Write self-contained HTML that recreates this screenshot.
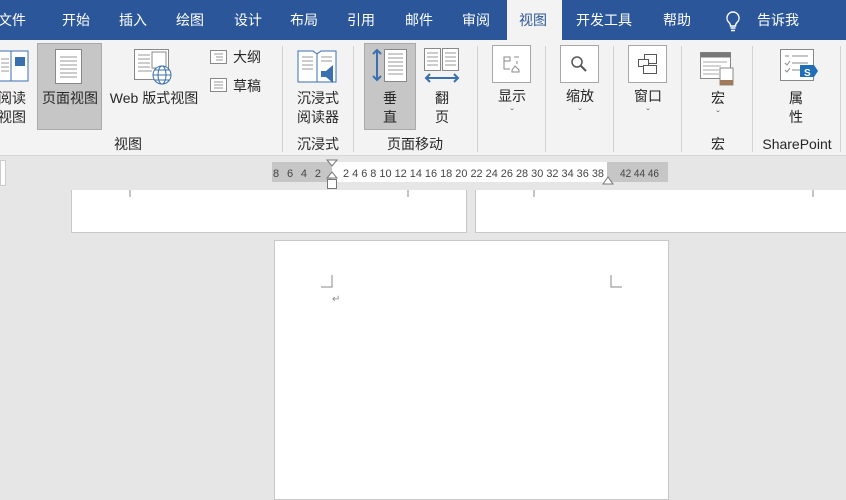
<!DOCTYPE html>
<html><head><meta charset="utf-8"><style>
*{margin:0;padding:0;box-sizing:border-box}
body{width:846px;height:495px;overflow:hidden;background:#e6e6e6;font-family:"Liberation Sans","Noto Sans CJK SC",sans-serif;position:relative;color:#262626}
.a{position:absolute}
.tabs{left:0;top:0;width:846px;height:40px;background:#2b579a}
.tab{position:absolute;top:11px;color:#fff;font-size:14px;line-height:18px}
.rib{left:0;top:40px;width:846px;height:116px;background:#f3f3f3;border-bottom:1px solid #d6d6d6}
.t{position:absolute;font-size:14px;line-height:19px;text-align:center;color:#262626;white-space:nowrap}
.sep{position:absolute;top:46px;width:1px;height:106px;background:#d2d2d2}
.box{position:absolute;background:#fff;border:1px solid #a8a8a8}
.pg{position:absolute;background:#fff;border:1px solid #c8c8c8}
.ln{stroke:#8a8a8a;stroke-width:1;fill:none}
</style></head><body>
<div class="a tabs"></div>
<div class="a" style="left:507px;top:0;width:55px;height:40px;background:#f3f3f3"></div>
<div class="tab" style="left:-2px">文件</div>
<div class="tab" style="left:62px">开始</div>
<div class="tab" style="left:119px">插入</div>
<div class="tab" style="left:176px">绘图</div>
<div class="tab" style="left:234px">设计</div>
<div class="tab" style="left:290px">布局</div>
<div class="tab" style="left:347px">引用</div>
<div class="tab" style="left:405px">邮件</div>
<div class="tab" style="left:462px">审阅</div>
<div class="tab" style="left:519px;color:#2b579a">视图</div>
<div class="tab" style="left:576px">开发工具</div>
<div class="tab" style="left:663px">帮助</div>
<svg class="a" style="left:724px;top:10px" width="18" height="22"><path d="M9 2a6 6 0 0 0-4 10.5c1 1 1.5 2 1.5 3.5h5c0-1.5.5-2.5 1.5-3.5A6 6 0 0 0 9 2zM6.5 18h5M7 20.5h4" stroke="#fff" stroke-width="1.4" fill="none"/></svg>
<div class="tab" style="left:757px">告诉我</div>

<div class="a rib"></div>
<svg class="a" style="left:0;top:49px" width="30" height="36"><rect x="-6" y="2" width="34" height="30" fill="#fff" stroke="#3a6fb0"/><line x1="11" y1="2" x2="11" y2="32" stroke="#3a6fb0"/><rect x="15" y="8" width="10" height="9" fill="#3a6fb0"/><path d="M1 10h8M1 14h8M1 18h8M1 22h8" stroke="#999"/></svg>
<div class="t" style="left:-4px;top:89px;width:32px">阅读<br>视图</div>
<div class="a" style="left:37px;top:43px;width:65px;height:87px;background:#c6c6c6;border:1px solid #aaa"></div>
<svg class="a" style="left:55px;top:49px" width="28" height="36"><rect x="0.5" y="0.5" width="26" height="34" fill="#fff" stroke="#888"/><path d="M5 8h17M5 12h17M5 16h17M5 20h17M5 24h17M5 28h17" stroke="#999"/></svg>
<div class="t" style="left:38px;top:89px;width:64px">页面视图</div>
<svg class="a" style="left:134px;top:49px" width="42" height="38"><rect x="0.5" y="0.5" width="34" height="30" fill="#fff" stroke="#888"/><rect x="18" y="3" width="14" height="16" fill="#fff" stroke="#888"/><path d="M4 6h12M4 10h12M4 14h12M4 18h12M4 22h14" stroke="#999"/><circle cx="28" cy="26" r="9" fill="#fff" stroke="#3a6fb0"/><ellipse cx="28" cy="26" rx="4" ry="9" fill="none" stroke="#3a6fb0"/><path d="M19 26h18M21 21h14M21 31h14" stroke="#3a6fb0"/></svg>
<div class="t" style="left:104px;top:89px;width:100px">Web 版式视图</div>
<svg class="a" style="left:210px;top:50px" width="18" height="15"><rect x="0.5" y="0.5" width="16" height="13" fill="#fff" stroke="#888"/><path d="M4 4h9M6 7h7M6 10h7" stroke="#999"/></svg>
<div class="t" style="left:233px;top:48px">大纲</div>
<svg class="a" style="left:210px;top:78px" width="18" height="15"><rect x="0.5" y="0.5" width="16" height="13" fill="#fff" stroke="#888"/><path d="M4 4h9M4 7h9M4 10h9" stroke="#999"/></svg>
<div class="t" style="left:233px;top:77px">草稿</div>
<div class="t" style="left:110px;top:135px;width:36px">视图</div>
<div class="sep" style="left:282px"></div>
<svg class="a" style="left:297px;top:47px" width="42" height="40"><path d="M1 4h15l4 3 4-3h15v31H1z" fill="#fff" stroke="#3a6fb0"/><line x1="20" y1="7" x2="20" y2="35" stroke="#3a6fb0"/><path d="M5 10h11M5 14h11M5 18h11M5 22h11M24 10h11M24 14h11" stroke="#999"/><path d="M24 24h5l7-6v18l-7-6h-5z" fill="#3a6fb0"/></svg>
<div class="t" style="left:288px;top:89px;width:60px">沉浸式<br>阅读器</div>
<div class="t" style="left:288px;top:135px;width:60px">沉浸式</div>
<div class="sep" style="left:353px"></div>
<div class="a" style="left:364px;top:43px;width:52px;height:87px;background:#c6c6c6;border:1px solid #aaa"></div>
<svg class="a" style="left:370px;top:48px" width="40" height="36"><path d="M7 2v30M3 6l4-4 4 4M3 28l4 4 4-4" stroke="#3a6fb0" stroke-width="2" fill="none"/><rect x="14.5" y="1.5" width="22" height="32" fill="#fff" stroke="#888"/><path d="M18 6h15M18 10h15M18 14h15M18 18h15M18 22h15M18 26h15" stroke="#999"/></svg>
<div class="t" style="left:364px;top:89px;width:52px">垂<br>直</div>
<svg class="a" style="left:424px;top:48px" width="36" height="38"><rect x="0.5" y="0.5" width="16" height="22" fill="#fff" stroke="#888"/><rect x="18.5" y="0.5" width="16" height="22" fill="#fff" stroke="#888"/><path d="M3 5h11M3 9h11M3 13h11M3 17h11M21 5h11M21 9h11M21 13h11M21 17h11" stroke="#999"/><path d="M2 30h32M6 26l-4 4 4 4M30 26l4 4-4 4" stroke="#3a6fb0" stroke-width="2" fill="none"/></svg>
<div class="t" style="left:424px;top:89px;width:36px">翻<br>页</div>
<div class="t" style="left:380px;top:135px;width:70px">页面移动</div>
<div class="sep" style="left:477px"></div>
<div class="box" style="left:492px;top:45px;width:39px;height:38px"></div>
<svg class="a" style="left:502px;top:54px" width="20" height="20"><path d="M2 3h6v4H2zM2 7v8h6M12 3h5M15 7v3M10 16l3-4 4 4v2h-7z" stroke="#888" fill="none"/></svg>
<div class="t" style="left:492px;top:87px;width:40px">显示</div>
<div class="t" style="left:492px;top:104px;width:40px;font-size:10px;color:#666">ˇ</div>
<div class="sep" style="left:545px"></div>
<div class="box" style="left:560px;top:45px;width:39px;height:38px"></div>
<svg class="a" style="left:570px;top:55px" width="18" height="18"><circle cx="7" cy="7" r="5" stroke="#555" stroke-width="1.5" fill="none"/><path d="M11 11l5 5" stroke="#555" stroke-width="2"/></svg>
<div class="t" style="left:560px;top:87px;width:40px">缩放</div>
<div class="t" style="left:560px;top:104px;width:40px;font-size:10px;color:#666">ˇ</div>
<div class="sep" style="left:613px"></div>
<div class="box" style="left:628px;top:45px;width:39px;height:38px"></div>
<svg class="a" style="left:637px;top:53px" width="22" height="22"><rect x="7.5" y="1.5" width="12" height="9" fill="#fff" stroke="#555"/><rect x="1.5" y="6.5" width="10" height="7" fill="#fff" stroke="#555"/><rect x="6.5" y="12.5" width="13" height="8" fill="#fff" stroke="#555"/></svg>
<div class="t" style="left:628px;top:87px;width:40px">窗口</div>
<div class="t" style="left:628px;top:104px;width:40px;font-size:10px;color:#666">ˇ</div>
<div class="sep" style="left:681px"></div>
<svg class="a" style="left:700px;top:52px" width="36" height="34"><rect x="0.5" y="0.5" width="30" height="26" fill="#fff" stroke="#888"/><rect x="0.5" y="0.5" width="30" height="5" fill="#777"/><path d="M3 10h24M3 14h18M3 18h16M3 22h16" stroke="#aaa"/><rect x="20" y="16" width="13" height="17" fill="#fff" stroke="#888"/><rect x="20" y="28" width="13" height="5" fill="#a07a5a"/></svg>
<div class="t" style="left:698px;top:89px;width:40px">宏</div>
<div class="t" style="left:698px;top:106px;width:40px;font-size:10px;color:#666">ˇ</div>
<div class="t" style="left:698px;top:135px;width:40px">宏</div>
<div class="sep" style="left:752px"></div>
<svg class="a" style="left:780px;top:49px" width="40" height="36"><rect x="0.5" y="0.5" width="33" height="31" fill="#fff" stroke="#888"/><path d="M5 7h4M12 7h16M5 14l2 2 3-4M12 14h16M5 21l2 2 3-4M12 21h8" stroke="#888" fill="none"/><path d="M20 16h14l4 6-4 6H20z" fill="#1e6fb8"/><text x="24" y="27" font-size="10" fill="#fff" font-weight="bold" font-family="Liberation Sans">S</text></svg>
<div class="t" style="left:776px;top:89px;width:40px">属<br>性</div>
<div class="t" style="left:755px;top:135px;width:84px">SharePoint</div>
<div class="sep" style="left:840px"></div>

<div class="a" style="left:0;top:157px;width:846px;height:34px;background:#e6e6e6"></div>
<div class="a" style="left:0;top:160px;width:6px;height:26px;background:#fff;border:1px solid #ccc"></div>
<div class="a" style="left:272px;top:162px;width:396px;height:20px;background:#c6c6c6"></div>
<div class="a" style="left:332px;top:162px;width:275px;height:20px;background:#fff"></div>
<svg class="a" style="left:0;top:162px" width="846" height="20" font-family="Liberation Sans" font-size="11" fill="#444">
<text x="273" y="15" textLength="48" lengthAdjust="spacing">8 6 4 2</text>
<text x="343" y="15" textLength="261" lengthAdjust="spacingAndGlyphs">2  4  6  8  10 12 14 16 18 20 22 24 26 28 30 32 34 36 38</text>
<text x="620" y="15" textLength="39" lengthAdjust="spacingAndGlyphs">42 44 46</text>
</svg>
<svg class="a" style="left:326px;top:159px" width="14" height="32"><path d="M1 1h10l-5 6z" fill="#fff" stroke="#777"/><path d="M1 19l5-6 5 6z" fill="#fff" stroke="#777"/><rect x="1.5" y="20.5" width="9" height="9" fill="#fff" stroke="#777"/></svg>
<svg class="a" style="left:602px;top:174px" width="14" height="12"><path d="M1 10l5-7 5 7z" fill="#fff" stroke="#777"/></svg>

<div class="pg" style="left:71px;top:190px;width:396px;height:43px;border-top:none"></div>
<div class="pg" style="left:475px;top:190px;width:380px;height:43px;border-top:none"></div>
<svg class="a" style="left:0;top:190px" width="846" height="10"><path d="M130 0v7M408 0v7M534 0v7M813 0v7" class="ln"/></svg>
<div class="pg" style="left:274px;top:240px;width:395px;height:260px"></div>
<svg class="a" style="left:318px;top:275px" width="310" height="30"><path d="M14 0v12H3M293 0v12h11" class="ln"/><text x="14" y="27" font-size="10" fill="#888" font-family="DejaVu Sans">↵</text></svg>
</body></html>
